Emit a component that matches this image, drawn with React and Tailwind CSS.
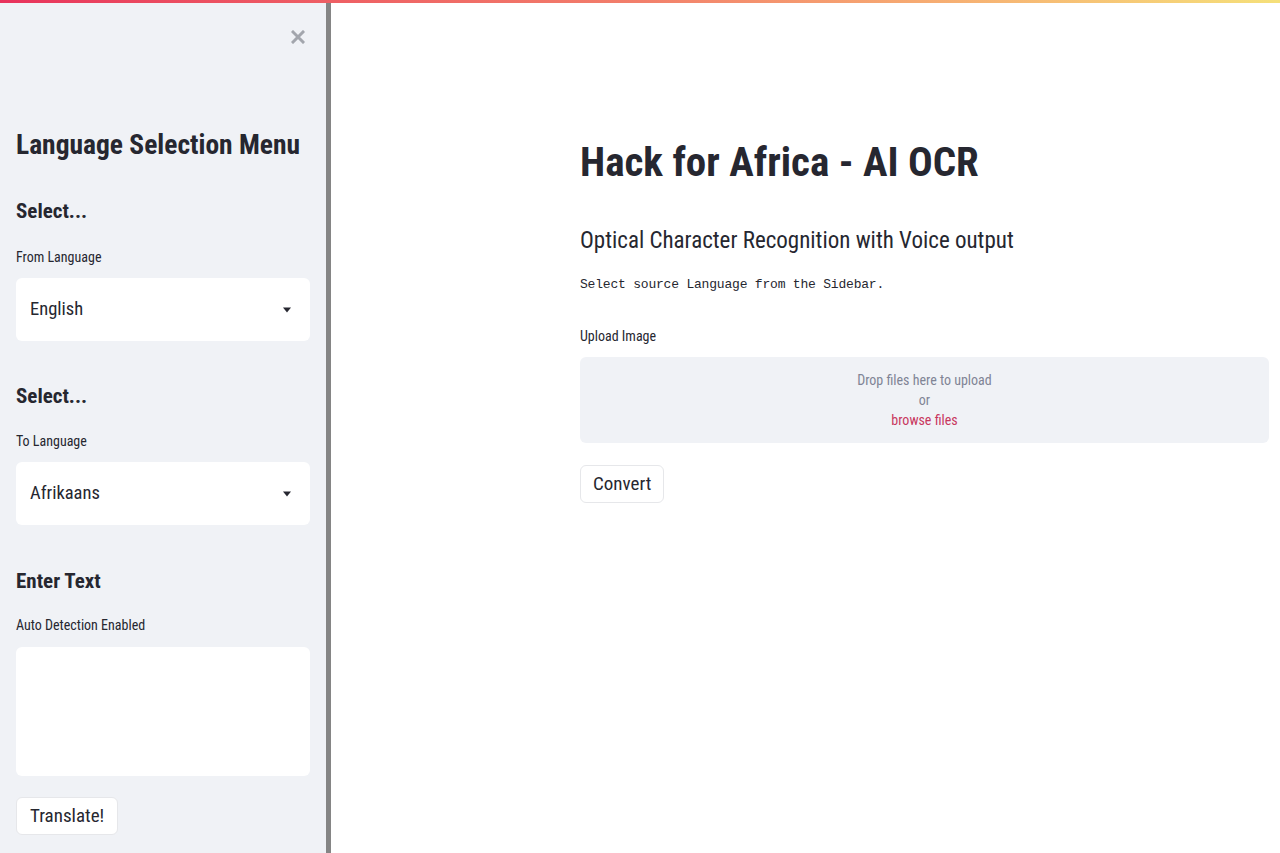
import React from 'react';

const sans = { fontFamily: 'Roboto, "Liberation Sans", sans-serif' };

const SelectBox = ({ value }) => (
  <div className="mt-[13px] h-[63px] bg-white rounded-md flex items-center justify-between pl-[14px] pr-[18px]">
    <span className="text-[18.5px] text-[#262730]">{value}</span>
    <svg width="10" height="6" viewBox="0 0 10 6"><path d="M1 0.5h8L5 5.5z" fill="#262730" /></svg>
  </div>
);

const App = () => {
  return (
    <div className="w-[1280px] h-[853px] flex flex-col bg-white overflow-hidden font-stretch-[82%]" style={sans}>
      {/* Top gradient bar */}
      <div className="h-[3px] shrink-0 bg-gradient-to-r from-[#e8325c] via-[#f27f6b] to-[#f5e07a]" />

      <div className="flex-1 flex min-h-0">
        {/* Sidebar */}
        <div className="w-[326px] shrink-0 bg-[#f0f2f6] px-4 flex flex-col">
          <div className="flex justify-end pt-[27px] pr-[5px]">
            <svg width="14" height="14" viewBox="0 0 14 14">
              <path d="M2 2L12 12M12 2L2 12" stroke="#a3a6ad" strokeWidth="3" strokeLinecap="square" />
            </svg>
          </div>

          <h1 className="mt-[83px] text-[27.5px] font-bold text-[#262730] leading-[36px] whitespace-nowrap">Language Selection Menu</h1>

          <h3 className="mt-[34px] text-[21px] font-bold text-[#262730] leading-[28px]">Select...</h3>
          <p className="mt-[24px] text-[14px] text-[#262730] leading-[16px]">From Language</p>
          <SelectBox value="English" />

          <h3 className="mt-[41px] text-[21px] font-bold text-[#262730] leading-[28px]">Select...</h3>
          <p className="mt-[23px] text-[14px] text-[#262730] leading-[16px]">To Language</p>
          <SelectBox value="Afrikaans" />

          <h3 className="mt-[42px] text-[21px] font-bold text-[#262730] leading-[28px]">Enter Text</h3>
          <p className="mt-[22px] text-[14px] text-[#262730] leading-[16px]">Auto Detection Enabled</p>
          <div className="mt-[14px] h-[129px] bg-white rounded-md" />

          <div className="mt-[21px]">
            <button className="h-[38px] px-[13px] bg-white border border-[#e6e7ea] rounded-md text-[19px] text-[#262730]">Translate!</button>
          </div>
        </div>

        {/* Divider */}
        <div className="w-[5px] shrink-0 bg-[#858585]" />

        {/* Main content */}
        <div className="flex-1 pl-[249px] pr-[11px]">
          <h1 className="mt-[133px] text-[41px] font-bold text-[#262730] leading-[52px]">Hack for Africa - AI OCR</h1>
          <h2 className="mt-[37px] text-[23px] text-[#262730] leading-[32px]">Optical Character Recognition with Voice output</h2>
          <p className="mt-[18px] text-[13px] text-[#262730] leading-[20px] tracking-[-0.2px]" style={{ fontFamily: '"Liberation Mono", "DejaVu Sans Mono", monospace' }}>
            Select source Language from the Sidebar.
          </p>

          <p className="mt-[33px] text-[14px] text-[#262730] leading-[16px]">Upload Image</p>
          <div className="mt-[13px] h-[86px] bg-[#f0f2f6] rounded-md flex flex-col items-center justify-center text-[14px] leading-[20px]">
            <span className="text-[#808495]">Drop files here to upload</span>
            <span className="text-[#808495]">or</span>
            <span className="text-[#c8375e]">browse files</span>
          </div>

          <div className="mt-[22px]">
            <button className="h-[38px] px-[12px] bg-white border border-[#e6e7ea] rounded-md text-[19px] text-[#262730]">Convert</button>
          </div>
        </div>
      </div>
    </div>
  );
};

export default App;
